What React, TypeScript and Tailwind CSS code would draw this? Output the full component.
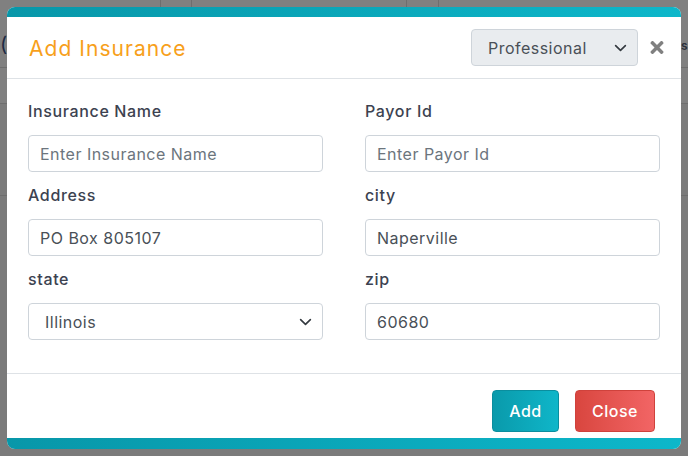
import React from "react";
import { FaTimes } from "react-icons/fa";

const Chevron = () => (
  <svg viewBox="0 0 16 16" className="w-[13px] h-[13px]" fill="none">
    <path d="M2 5l6 6 6-6" stroke="#343a40" strokeWidth="2" strokeLinecap="round" strokeLinejoin="round" />
  </svg>
);

const Field = ({ label, children }: { label: string; children: React.ReactNode }) => (
  <div className="flex flex-col">
    <label className="h-6 leading-6 text-[16px] tracking-[0.04em] font-medium text-[#3c4250] mb-3">{label}</label>
    {children}
  </div>
);

const TextInput = ({ value, placeholder }: { value?: string; placeholder?: string }) => (
  <input
    type="text"
    defaultValue={value}
    placeholder={placeholder}
    className="h-[37px] w-full rounded border border-[#ced4da] bg-white px-[11px] text-[16px] tracking-[0.03em] text-[#495057] placeholder:text-[#6c757d] outline-none"
  />
);

const SelectBox = ({ value, className }: { value: string; className: string }) => (
  <div className={"relative flex items-center rounded border border-[#ced4da] " + className}>
    <span className="text-[16px] tracking-[0.03em] text-[#495057]">{value}</span>
    <span className="absolute right-[10px] top-1/2 -translate-y-1/2 flex">
      <Chevron />
    </span>
  </div>
);

const Backdrop = () => (
  <div className="absolute inset-0 flex flex-col">
    <div className="h-[68px] border-b border-[#6e6e6e] flex">
      <div className="w-[161px] border-r border-[#6e6e6e]" />
      <div className="w-[31px] border-r border-[#6e6e6e]" />
      <div className="w-[215px] border-r border-[#6e6e6e]" />
      <div className="w-[32px] border-r border-[#6e6e6e]" />
      <div className="flex-1" />
    </div>
    <div className="h-[36px] border-b border-[#6e6e6e]" />
    <div className="h-[92px] border-b border-[#6e6e6e] bg-[#7b7b7b]" />
    <div className="flex-1 bg-[#7b7b7b]" />
    <div className="absolute left-0 top-[32px] text-[20px] leading-[24px] text-[#1c2a44]">(</div>
    <div className="absolute left-[681px] top-[37px] text-[12px] font-semibold leading-[18px] text-[#2a2f3a]">s</div>
  </div>
);

export default function App() {
  return (
    <div className="relative h-[456px] w-[688px] overflow-hidden bg-[#808080] font-['Inter',sans-serif]">
      <Backdrop />
      <div className="relative pl-[7px] pt-[7px]">
        <div className="w-[674px] overflow-hidden rounded-lg bg-white">
          <div className="h-[10px] bg-gradient-to-r from-[#0897a9] to-[#0db7ca]" />
          <div className="flex h-[62px] items-center border-b border-[#dee2e6] pl-[22px] pr-[15px]">
            <h2 className="flex-1 pt-[2px] text-[21px] tracking-[0.05em] text-[#f7a01b]">Add Insurance</h2>
            <SelectBox value="Professional" className="h-[37px] w-[167px] bg-[#e9ecef] pl-4" />
            <button className="ml-[10px] flex h-6 w-[18px] items-center justify-center text-[#808080]">
              <FaTimes className="h-[19px] w-[19px]" />
            </button>
          </div>
          <div className="grid grid-cols-2 gap-x-[42px] gap-y-[11px] pb-[33px] pl-[21px] pr-[21px] pt-5">
            <Field label="Insurance Name">
              <TextInput placeholder="Enter Insurance Name" />
            </Field>
            <Field label="Payor Id">
              <TextInput placeholder="Enter Payor Id" />
            </Field>
            <Field label="Address">
              <TextInput value="PO Box 805107" />
            </Field>
            <Field label="city">
              <TextInput value="Naperville" />
            </Field>
            <Field label="state">
              <SelectBox value="Illinois" className="h-[37px] w-full bg-white pl-4" />
            </Field>
            <Field label="zip">
              <TextInput value="60680" />
            </Field>
          </div>
          <div className="flex justify-end gap-4 border-t border-[#dee2e6] pb-[6px] pr-[26px] pt-4">
            <button className="h-[42px] w-[67px] rounded border border-[#0a8e9e] bg-gradient-to-r from-[#0a9aab] to-[#0fb6c9] text-[16px] tracking-[0.03em] font-medium text-white">
              Add
            </button>
            <button className="h-[42px] w-[80px] rounded border border-[#cf423c] bg-gradient-to-r from-[#d9463f] to-[#f26565] text-[16px] tracking-[0.03em] font-medium text-white">
              Close
            </button>
          </div>
          <div className="h-[11px] bg-gradient-to-r from-[#0897a9] to-[#0db7ca]" />
        </div>
      </div>
    </div>
  );
}
